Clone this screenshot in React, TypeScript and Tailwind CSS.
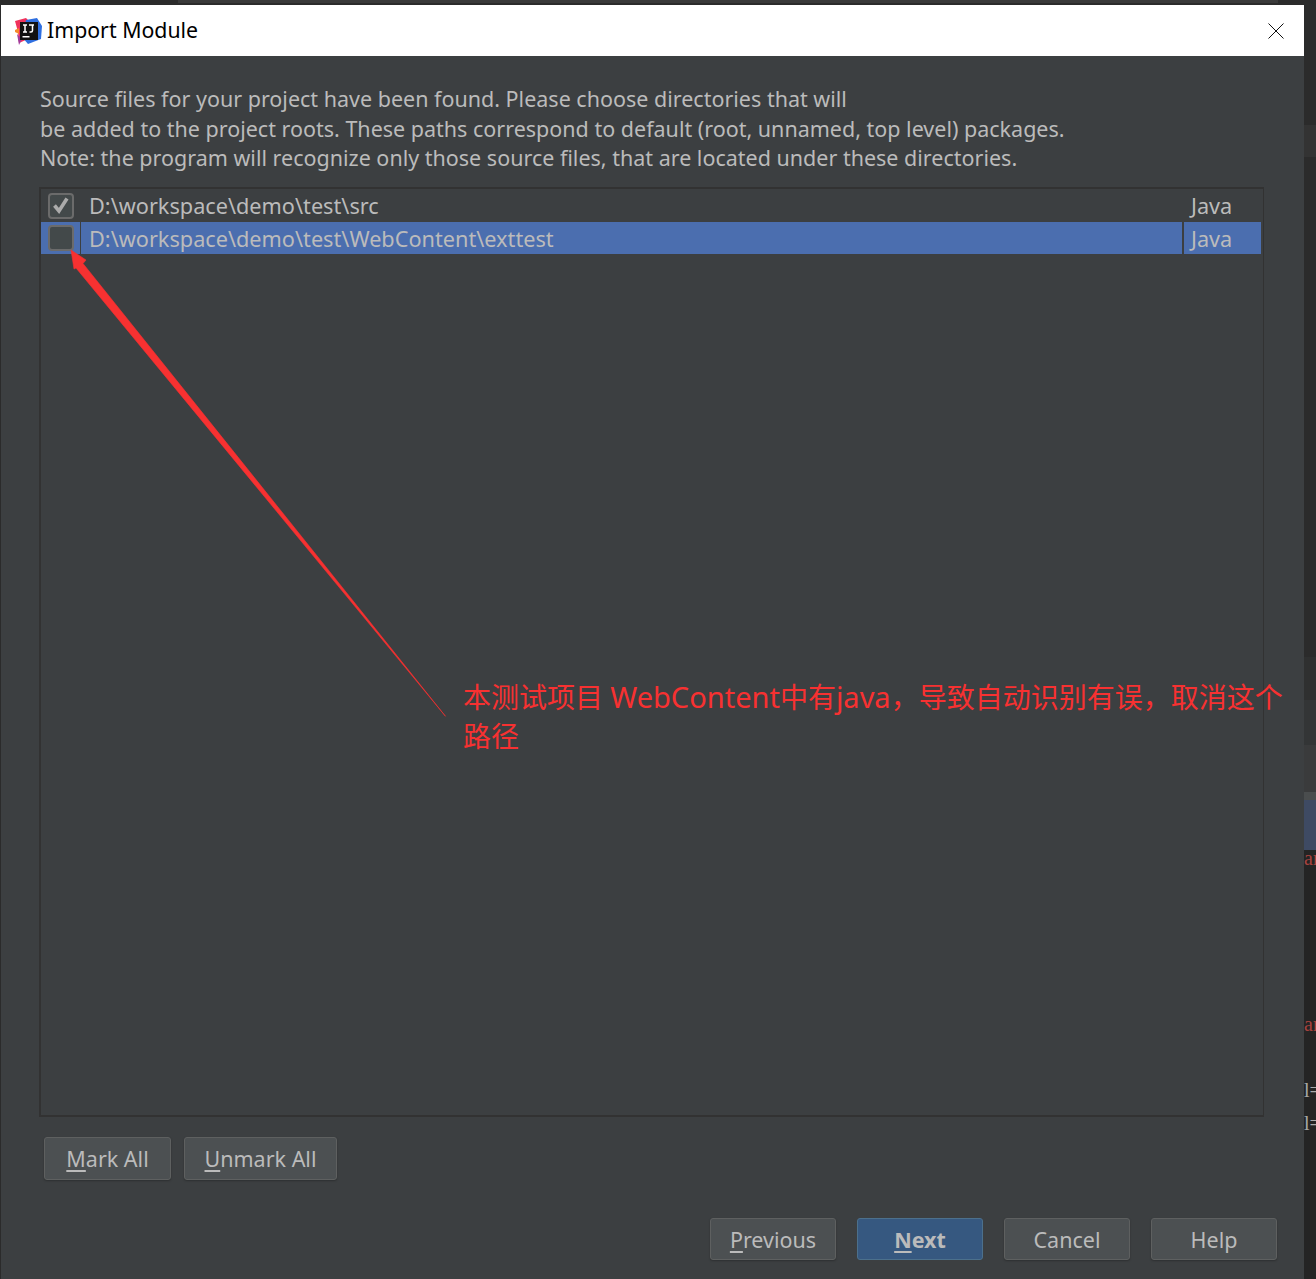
import React from "react";

const font = { fontFamily: '"Noto Sans", "Noto Sans CJK SC", sans-serif' };

function Btn({ children, w, h, primary }: { children: React.ReactNode; w: string; h: string; primary?: boolean }) {
  return (
    <div
      className={`${w} ${h} flex items-center justify-center rounded-[3px] border text-[21.5px] leading-none pt-[1px] ${
        primary
          ? "bg-[#365880] border-[#4c708c] text-[#bbbbbb] font-bold"
          : "bg-[#4c5052] border-[#5e6060] text-[#bbbbbb] shadow-[0_1px_2px_rgba(0,0,0,0.25)]"
      }`}
    >
      <span>{children}</span>
    </div>
  );
}

function Mn({ children }: { children: React.ReactNode }) {
  return <u className="decoration-2 underline-offset-[3px]">{children}</u>;
}

function Check({ checked }: { checked?: boolean }) {
  return (
    <div className="w-[26px] h-[26px] rounded-[4px] border-2 border-[#6b6b6b] bg-[#43494a] flex items-center justify-center">
      {checked && (
        <svg width="18" height="18" viewBox="0 0 18 18" fill="none">
          <path d="M2.5 8.5 L7 14 L15 1.5" stroke="#ababab" strokeWidth="3.6" />
        </svg>
      )}
    </div>
  );
}

export default function App() {
  return (
    <div className="relative w-[1316px] h-[1279px] overflow-hidden bg-[#2b2b2b] pt-[5px]" style={font}>
      {/* window parts behind the dialog */}
      <div className="absolute left-[178px] top-0 w-[1100px] h-[3px] bg-[#3a3a3a]" />
      <div className="absolute left-[1304px] top-[125px] w-3 h-[32px] bg-[#333333]" />
      <div className="absolute left-[1304px] top-[657px] w-3 h-[43px] bg-[#2f3030]" />
      <div className="absolute left-[1304px] top-[700px] w-3 h-[45px] bg-[#333536]" />
      <div className="absolute left-[1304px] top-[745px] w-3 h-[47px] bg-[#3a3b3c]" />
      <div className="absolute left-[1304px] top-[792px] w-3 h-[8px] bg-[#4a4d4e]" />
      <div className="absolute left-[1304px] top-[800px] w-3 h-[50px] bg-[#3e4a63]" />
      <div className="absolute left-[1304px] top-[850px] w-3 h-[429px] bg-[#242424] overflow-hidden font-['Liberation_Serif',serif] text-[20px] leading-6">
        <div className="absolute left-0 top-[-4px] text-[#a8423e]">ar</div>
        <div className="absolute left-0 top-[162px] text-[#a8423e]">ar</div>
        <div className="absolute left-0 top-[228px] text-[#a9a9a9]">l=</div>
        <div className="absolute left-0 top-[261px] text-[#a9a9a9]">l=</div>
      </div>

      <div className="relative ml-px w-[1303px] h-[1274px] bg-[#3c3f41] flex flex-col">
        {/* title bar */}
        <div className="h-[51px] bg-white flex items-center pl-[13px] pr-[20px] shrink-0">
          <svg width="28" height="28" viewBox="0 0 28 28" className="shrink-0">
            <path d="M1 4 L12 1 L17 6 L14 22 L5 26 L4 15 Z" fill="#f0325c" />
            <path d="M12 3 L23 1 L28 9 L27 22 L14 27 L8 20 Z" fill="#2f6fe0" />
            <path d="M1 13 L5 11 L5 17 L1 15 Z" fill="#f58a2c" />
            <path d="M3 17 L8 22 L5 28 Z" fill="#a13a9a" />
            <rect x="6" y="5" width="18" height="18" fill="#111111" />
            <rect x="8.5" y="19" width="7" height="1.5" fill="#ffffff" />
            <path d="M9 8 H13 M11 8 V15 M9 15 H13 M15 8 H20 M18.5 8 V13.5 Q18.5 15 17 15 H15.5" stroke="#ffffff" strokeWidth="1.5" fill="none" />
          </svg>
          <span className="ml-[5px] text-[21.3px] leading-none text-black pb-[2px]">Import Module</span>
          <svg width="16" height="16" viewBox="0 0 16 16" className="ml-auto" fill="none">
            <path d="M0.5 0.5 L15.5 15.5 M15.5 0.5 L0.5 15.5" stroke="#111111" strokeWidth="1" />
          </svg>
        </div>

        {/* message */}
        <div className="pl-[39px] pt-[28px] text-[21.5px] leading-[29.7px] text-[#bbbbbb] h-[131px] shrink-0">
          <p>Source files for your project have been found. Please choose directories that will</p>
          <p>be added to the project roots. These paths correspond to default (root, unnamed, top level) packages.</p>
          <p>Note: the program will recognize only those source files, that are located under these directories.</p>
        </div>

        {/* table */}
        <div className="ml-[38px] w-[1225px] h-[930px] border-2 border-r border-[#323232] pr-[2px] shrink-0 text-[21.7px] text-[#bbbbbb]">
          <div className="h-[33px] flex items-center">
            <div className="w-[41px] pl-[7px] shrink-0"><Check checked /></div>
            <div className="flex-1 pl-[7px] pt-[2px]">D:\workspace\demo\test\src</div>
            <div className="w-[77px] pl-[7px] pt-[2px] shrink-0">Java</div>
          </div>
          <div className="h-[32px] flex items-center bg-[#4b6eaf]">
            <div className="w-[39px] pl-[7px] h-full flex items-center shrink-0"><Check /></div>
            <div className="w-px h-full bg-[#3c3f41] shrink-0" />
            <div className="flex-1 pl-[8px] pt-[3px]">D:\workspace\demo\test\WebContent\exttest</div>
            <div className="w-[2px] h-full bg-[#3c3f41] shrink-0" />
            <div className="w-[77px] pl-[7px] pt-[3px] shrink-0">Java</div>
          </div>
        </div>

        {/* mark buttons */}
        <div className="ml-[43px] mt-[20px] flex gap-[13px] shrink-0">
          <Btn w="w-[127px]" h="h-[43px]"><Mn>M</Mn>ark All</Btn>
          <Btn w="w-[153px]" h="h-[43px]"><Mn>U</Mn>nmark All</Btn>
        </div>

        {/* footer buttons */}
        <div className="mt-[38px] pr-[27px] flex justify-end gap-[21px] shrink-0">
          <Btn w="w-[126px]" h="h-[42px]"><Mn>P</Mn>revious</Btn>
          <Btn w="w-[126px]" h="h-[42px]" primary><Mn>N</Mn>ext</Btn>
          <Btn w="w-[126px]" h="h-[42px]">Cancel</Btn>
          <Btn w="w-[126px]" h="h-[42px]">Help</Btn>
        </div>
      </div>

      {/* annotation */}
      <svg className="absolute left-0 top-0 pointer-events-none" width="1316" height="1279" viewBox="0 0 1316 1279">
        <path d="M71 250 L86 260 L83 263.5 L445.5 716.3 L76 268 L74 269 Z" fill="#f73131" stroke="#f73131" strokeWidth="0.6" />
      </svg>
      <div className="absolute left-[463px] top-[677px] w-[830px] text-[28px] leading-[39px] text-[#f73131]">
        <div className="whitespace-nowrap">本测试项目 <span className="text-[29px]">WebContent</span>中有<span className="text-[29px]">java</span>，导致自动识别有误，取消这个</div>
        <div>路径</div>
      </div>
    </div>
  );
}
